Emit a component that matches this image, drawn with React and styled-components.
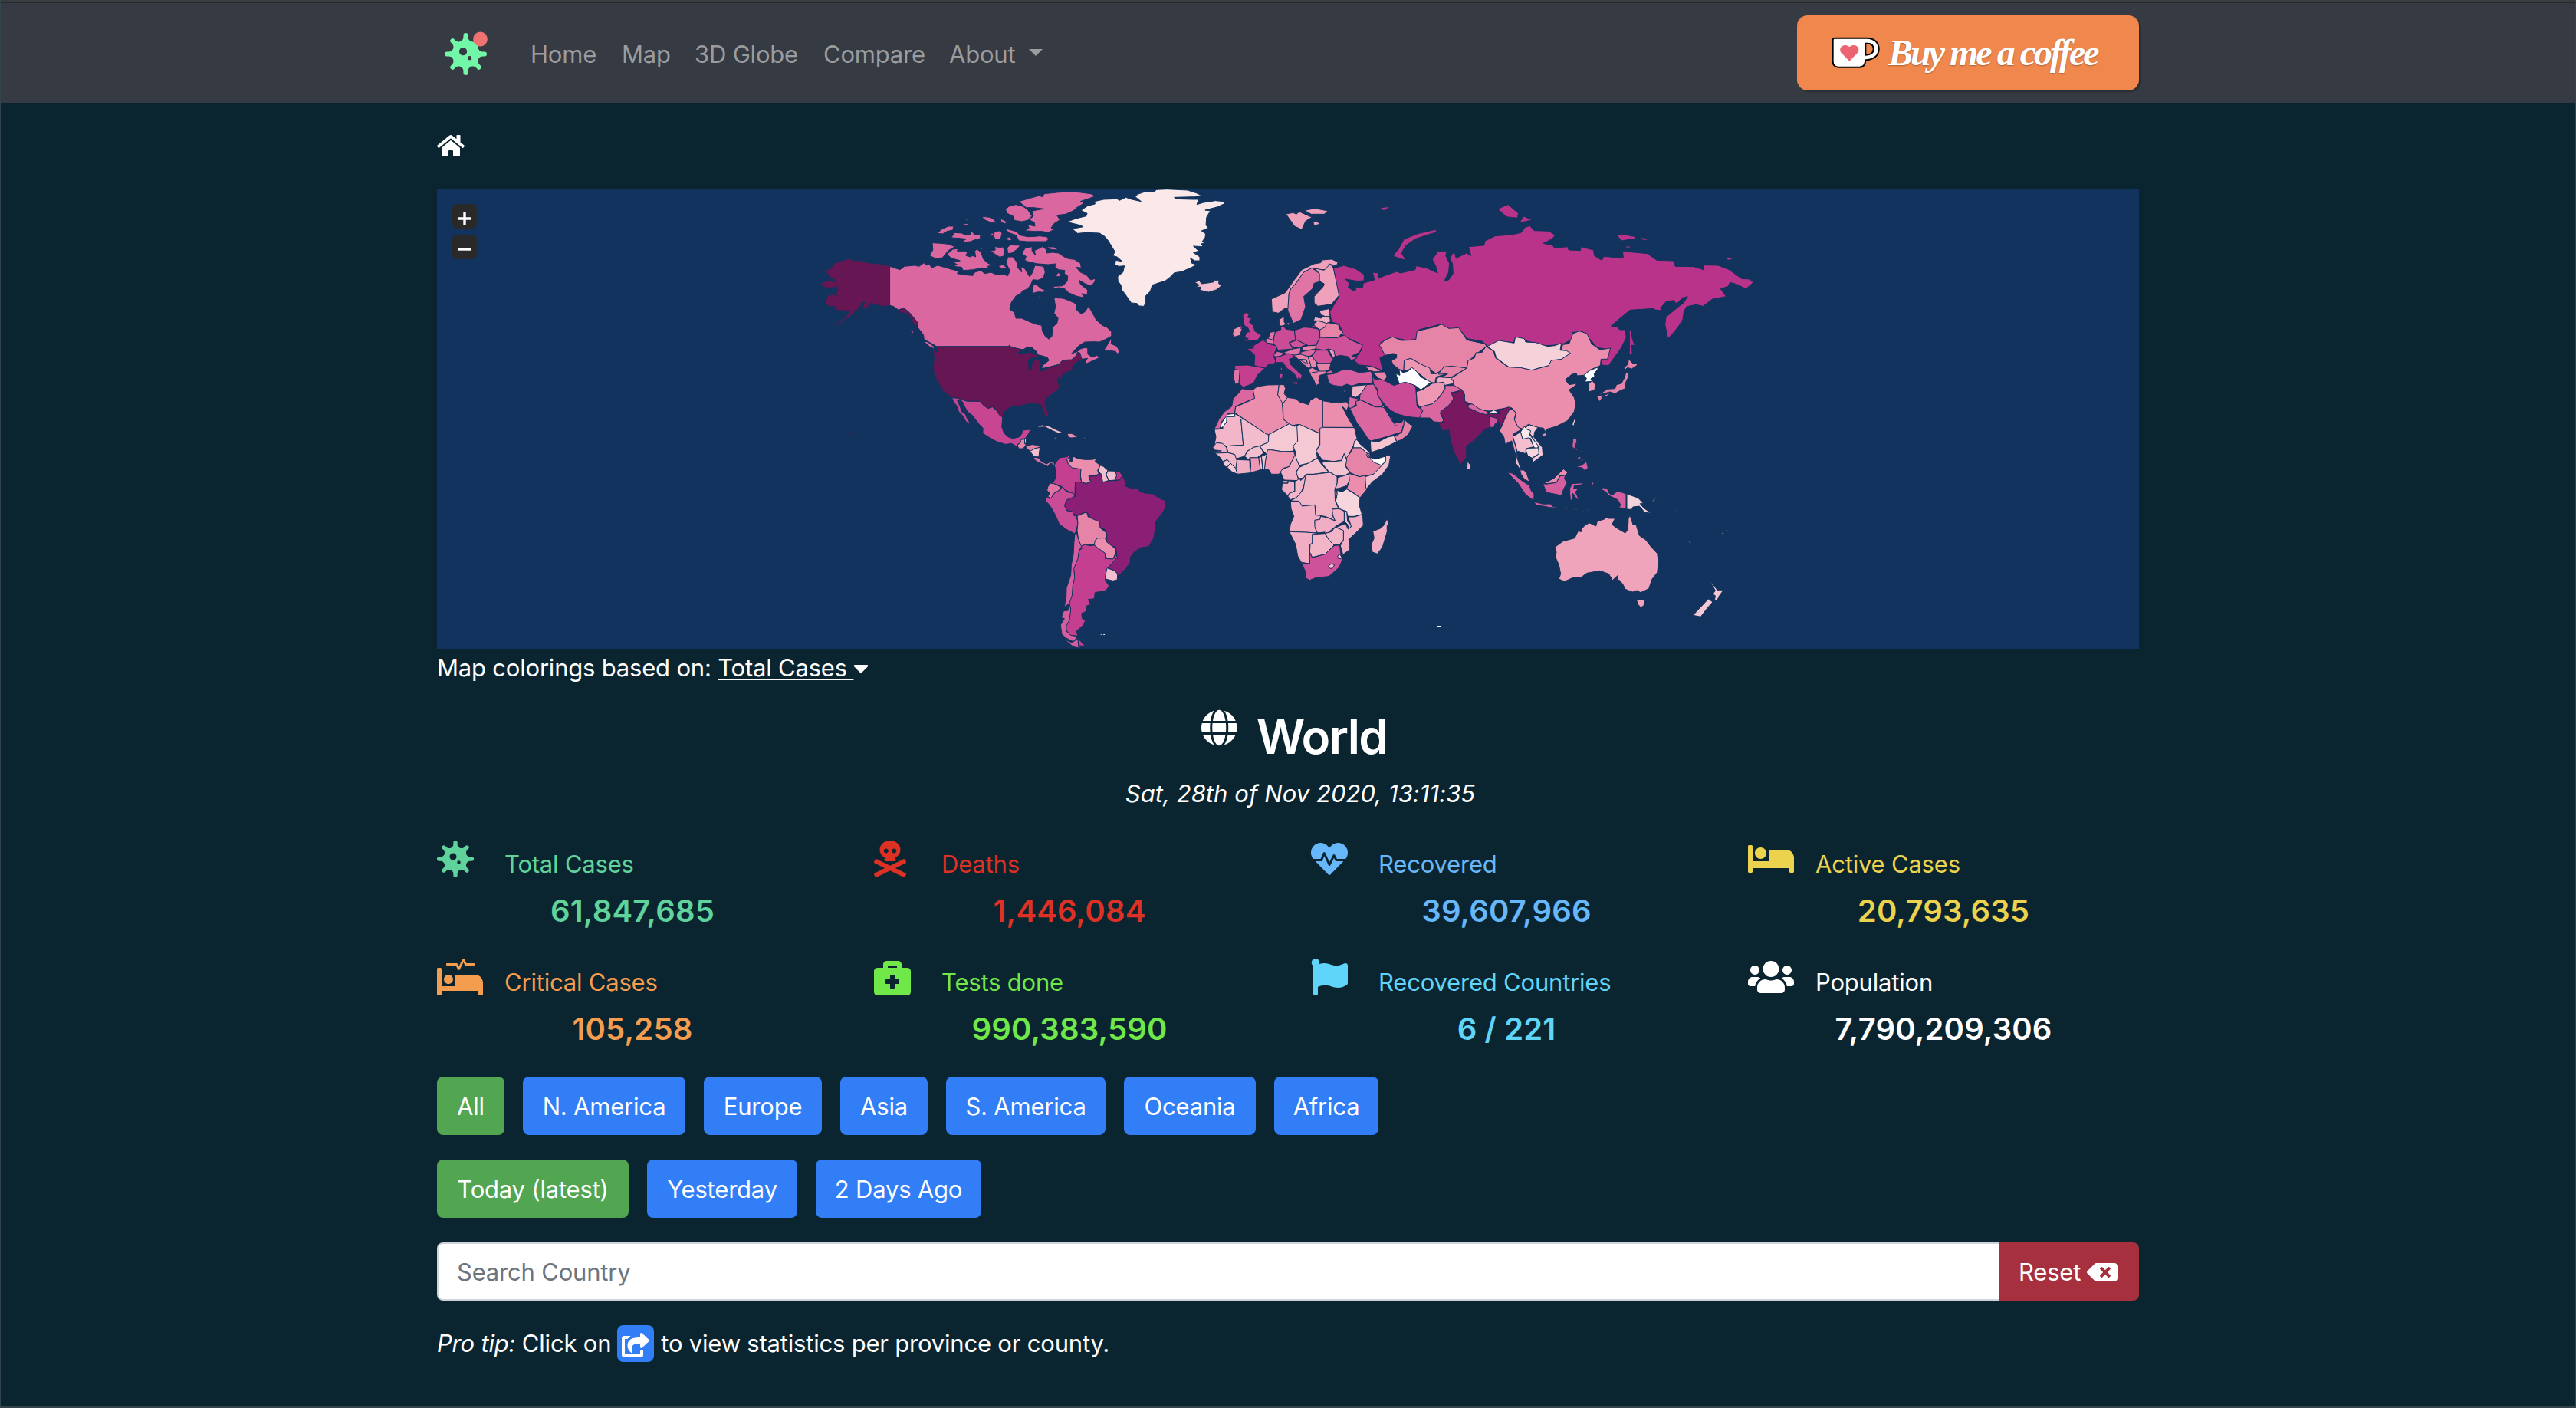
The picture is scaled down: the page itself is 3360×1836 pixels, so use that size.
import React from 'react';
import styled, { createGlobalStyle } from 'styled-components';
import {
  FaHome, FaGlobe, FaVirus, FaSkullCrossbones, FaHeartbeat, FaBed, FaProcedures,
  FaBriefcaseMedical, FaFlag, FaUsers, FaCaretDown, FaBackspace, FaShareSquare,
} from 'react-icons/fa';

const Global = createGlobalStyle`
  * { box-sizing: border-box; }
  html, body { margin: 0; background: #0b2530; }
  body {
    font-family: Inter, "Liberation Sans", sans-serif;
    font-size: 31px;
    line-height: 48px;
    letter-spacing: -0.2px;
    color: #fff;
  }
  svg { display: block; flex: none; }
`;

const Page = styled.div`
  height: 1836px;
  overflow: hidden;
  background: #0b2530;
  border: solid #33444d;
  border-width: 0 1px 2px;
`;

const Navbar = styled.nav`
  height: 134px;
  background: #363a42;
  border-top: 2px solid #383d43;
  box-shadow: inset 0 2px 0 #2a2728;
`;

const Container = styled.div`
  width: 2220px;
  margin: 0 auto;
`;

const NavInner = styled(Container)`
  height: 132px;
  display: flex;
  align-items: center;
`;

const Logo = styled.svg`
  width: 58px;
  height: 58px;
  margin: 2px 55px 0 9px;
`;

const NavLink = styled.a`
  display: flex;
  align-items: center;
  margin: 5px 32px 0 0;
  width: ${(p) => p.$w}px;
  white-space: nowrap;
  color: #9a9c9f;
`;

const Caret = styled.span`
  margin: 0 0 5px 18px;
  border: 9px solid transparent;
  border-top: 9px solid #9a9c9f;
  border-bottom: 0;
`;

const CoffeeButton = styled.a`
  display: flex;
  align-items: center;
  width: 446px;
  height: 98px;
  margin: 2px 0 0 auto;
  padding: 0 0 0 45px;
  border-radius: 14px;
  background: #f0884e;
  box-shadow: 2px 2px 2px rgba(0, 0, 0, 0.25);
`;

const Cup = styled.svg`
  width: 64px;
  height: 42px;
`;

const CoffeeText = styled.span`
  margin: 0 0 0 10px;
  font: italic 700 48px/60px "Liberation Serif", serif;
  letter-spacing: -3px;
  white-space: nowrap;
  text-shadow: 0 1px 2px rgba(0, 0, 0, 0.3);
`;

/* Font Awesome glyphs differ in width, so the icon box follows the glyph's own proportions. */
const Glyph = styled.span`
  display: block;
  flex: none;
  margin: ${(p) => p.$m || 0};
  width: ${(p) => (p.$size * (p.$units || 512)) / 512}px;
  height: ${(p) => p.$size}px;
  svg { width: 100%; height: 100%; }
`;

const Crumbs = styled.div`
  height: 112px;
  padding-top: 40px;
`;

const MapPanel = styled.div`
  position: relative;
  height: 600px;
  background: #12335d;
  overflow: hidden;
`;

const MapSvg = styled.svg`
  width: 2220px;
  height: 600px;
  path, circle {
    stroke: #12335d;
    stroke-width: 1;
    stroke-linejoin: round;
    vector-effect: non-scaling-stroke;
  }
  .isle { stroke-width: 0; }
`;

const ZoomStack = styled.div`
  position: absolute;
  left: 20px;
  top: 20px;
  display: grid;
  gap: 8px;
`;

const ZoomButton = styled.div`
  width: 32px;
  height: 32px;
  border-radius: 6px;
  background: #292929;
  display: grid;
  place-items: center;
  svg { width: 16px; height: 16px; margin: 5px 0 0 0; }
`;

const MapCaption = styled.div`
  display: flex;
  height: 48px;
  padding-top: 1px;
  white-space: pre;
  u { text-decoration-thickness: 2px; text-underline-offset: 3px; }
`;

const Title = styled.h1`
  display: flex;
  justify-content: center;
  margin: 28px 0 0;
  padding-left: 16px;
  height: 77px;
  font-size: 62px;
  line-height: 77px;
  font-weight: 600;
  letter-spacing: -1.6px;
`;

const DateLine = styled.div`
  margin-top: 12px;
  height: 47px;
  text-align: center;
  font-style: italic;
  padding-left: 32px;
  letter-spacing: 0.05px;
`;

const Stats = styled.div`
  display: grid;
  grid-template-columns: repeat(4, 510px);
  grid-auto-rows: 154px;
  column-gap: 60px;
  margin-top: 38px;
`;

const Stat = styled.div`
  color: ${(p) => p.$color};
`;

const StatHead = styled.div`
  display: flex;
  height: 55px;
`;

const StatIcon = styled.div`
  width: 88px;
`;

const StatLabel = styled.div`
  padding-top: 7px;
  white-space: nowrap;
`;

const StatValue = styled.div`
  margin-top: 7px;
  text-align: center;
  font-size: 40px;
  line-height: 60px;
  font-weight: 600;
  letter-spacing: 0.15px;
`;

const ButtonRow = styled.div`
  display: flex;
  gap: 24px;
  margin-bottom: 32px;
`;

const Button = styled.button`
  width: ${(p) => p.$w}px;
  height: 76px;
  padding: 1px 0 0;
  border: 0;
  border-radius: 8px;
  background: ${(p) => (p.$active ? '#52a551' : '#317ef7')};
  color: #fff;
  font: inherit;
  letter-spacing: inherit;
  white-space: nowrap;
`;

const Search = styled.div`
  display: flex;
  height: 76px;
  margin-bottom: 32px;
`;

const SearchField = styled.div`
  flex: 1;
  padding: 13px 24px 0;
  border: 2px solid #ced4da;
  border-right: 0;
  border-radius: 8px 0 0 8px;
  background: #fff;
  color: #6c757d;
`;

const ResetButton = styled.button`
  width: 182px;
  display: flex;
  align-items: center;
  gap: 8px;
  padding: 1px 0 0 25px;
  border: 0;
  border-radius: 0 8px 8px 0;
  background: #a7303f;
  color: #fff;
  font: inherit;
  letter-spacing: inherit;
`;

const Tip = styled.div`
  display: flex;
  white-space: pre;
`;

const TipBadge = styled.span`
  width: 48px;
  height: 48px;
  margin: 0 9px 0 8px;
  border-radius: 8px;
  background: #317ef7;
  display: grid;
  place-items: center;
`;

const C = {
  us: '#671654', canada: '#da679f', green: '#fbe9e9', mex: '#c84592', russia: '#b83389',
  india: '#771860', brazil: '#8b1f76', china: '#eb8eae', a: '#f5d2da', b: '#e684a8',
  c: '#c53f91', d: '#cb4c96', e: '#cd5299', f: '#f3bfce', g: '#f0adc3', h: '#f4c9d4',
  i: '#ee97b2', j: '#e074a5', k: '#d55e9f', white: '#ffffff', aus: '#efa4bb', n: '#efa0ba',
};

const regions = [
  {
    t: 'translate(470 -6) scale(.38265 .33333)',
    shapes: [
      [C.us, 'M315,322L300,315 268,311 240,308 214,299 190,300 177,291 160,297 145,302 127,310 118,325 105,337 88,341 105,352 112,365 128,375 130,383 110,377 92,382 77,392 92,404 115,407 135,402 138,415 130,428 138,436 120,432 102,436 103,447 92,456 100,473 115,480 128,478 130,492 150,495 165,497 180,496 172,510 160,525 150,535 130,547 106,559 125,553 155,541 160,531 180,519 195,500 213,483 220,465 230,462 220,490 245,480 250,466 270,473 290,479 315,474 345,493 362,484 380,500 395,520 412,545 408,554 395,545 378,508 355,503 335,490 315,478Z M194,520L212,514 200,526Z M178,979 183,975 187,980 182,983Z'],
      [C.us, 'M462,648L480,660 474,635 722,635 745,642 770,648 752,660 765,665 785,658 800,660 815,668 825,675 800,680 788,690 790,725 798,728 800,700 812,685 825,690 832,705 825,728 835,732 850,722 868,714 890,707 905,690 935,688 948,675 955,658 963,662 970,685 950,700 937,715 940,725 920,735 905,745 897,765 890,755 888,770 893,790 890,805 870,820 850,838 843,855 850,880 857,900 855,915 845,905 835,885 832,865 815,860 790,860 770,865 760,868 735,868 715,880 702,895 702,912 690,905 680,885 665,870 650,878 635,868 620,850 600,850 580,850 545,838 527,835 497,810 485,785 470,755 465,735 463,710 467,685Z'],
      [C.canada, 'M315,322L350,335 365,322 400,318 415,322 432,308 440,318 450,312 458,328 478,318 500,325 530,335 550,340 545,350 570,355 598,358 605,345 625,338 640,350 660,345 680,355 710,352 715,362 725,340 712,310 718,285 735,285 748,305 752,328 765,345 762,325 775,330 785,350 792,363 802,345 810,318 840,322 845,345 838,368 820,376 803,374 795,395 785,410 768,418 760,430 745,438 730,462 724,490 740,502 745,525 765,525 790,538 812,548 833,553 835,575 845,595 858,607 868,595 870,560 885,545 889,525 875,505 880,480 875,445 905,447 925,455 950,468 950,490 967,508 980,500 993,478 1008,508 1018,530 1040,553 1055,560 1071,578 1071,595 1050,608 1030,618 1010,617 980,618 960,632 935,663 955,655 965,645 980,640 990,642 990,665 1005,678 1020,670 1032,678 1010,690 985,703 982,690 990,682 970,685 963,660 955,658 948,675 935,687 905,689 890,706 870,712 850,718 832,722 840,705 858,690 852,678 835,672 820,668 815,655 800,640 785,637 770,648 745,642 728,636 722,630 722,635 474,635 455,622 432,608 430,590 410,560 412,545 395,520 380,500 362,484 345,493 330,480 315,474Z'],
      [C.canada, 'M1071,600L1062,620 1045,650 1065,652 1085,655 1092,665 1098,655 1090,635 1070,625Z M430,615L445,618 465,635 468,645 450,635Z M385,570L395,572 395,588Z'],
      [C.canada, 'M755,68L785,58 825,45 835,50 842,38 885,33 920,30 960,32 1000,38 1018,47 990,58 965,68 978,75 955,90 940,105 915,118 885,122 895,140 875,155 865,172 875,178 855,190 835,185 805,185 775,182 790,172 785,158 810,165 808,150 790,140 805,125 800,105 840,97 805,92 780,92Z M710,100L720,88 745,80 770,88 785,100 800,125 785,142 765,147 740,142 735,125 715,115Z M630,127L655,130 672,140 678,153 655,148 635,138Z M693,135L715,148 708,155 695,150Z M562,155L588,155 575,163Z M568,140L585,137 583,143Z M478,193L490,178 515,165 533,165 530,180 510,185 495,195Z M525,210L535,190 560,192 575,200 590,198 592,182 605,198 625,200 622,215 605,218 590,225 560,228 575,215 555,212Z M657,195L665,192 670,198 672,186 690,183 698,192 693,215 675,217 670,205Z M708,215L722,207 733,215 725,222Z M708,173L745,185 760,200 785,206 810,205 825,203 850,206 857,215 848,225 820,225 785,225 755,222 745,200 720,190Z'],
      [C.canada, 'M460,230L490,232 515,235 537,245 515,260 495,288 475,293 450,280 462,258Z M510,275L530,255 548,253 545,262 565,262 580,265 575,280 590,285 598,280 608,285 605,262 612,255 625,265 635,295 650,310 667,318 648,322 655,332 630,328 600,335 565,338 560,325 530,322 545,315 530,305 555,300 525,290Z M658,262L675,258 672,245 695,248 700,245 708,265 703,282 690,286 675,275Z M715,250L725,238 760,240 750,255 730,270 718,272Z M685,322L700,315 715,328 700,332Z M620,250L635,247 630,256Z'],
      [C.canada, 'M768,265L778,250 800,245 800,262 812,278 808,260 828,250 835,245 848,255 850,270 870,267 890,270 910,285 925,292 945,295 965,310 968,328 950,325 965,345 985,355 1000,375 1015,370 1015,380 1003,398 985,392 962,377 965,392 990,415 988,435 970,428 978,445 950,438 925,425 910,408 890,405 875,410 873,400 905,398 920,380 922,360 910,350 912,338 890,335 878,325 880,312 855,315 820,312 790,305 775,298 780,283 768,275Z M850,246L875,246 888,258 865,256Z M882,355L890,347 898,352 893,362 884,362Z M805,392L815,393 830,408 852,420 835,423 820,422 800,428 803,410Z M822,441L835,438 826,446Z'],
      [C.green, 'M918,148L950,135 985,125 988,115 967,103 990,85 1015,78 1013,68 1045,60 1090,58 1098,64 1120,52 1140,60 1172,68 1152,50 1160,40 1183,31 1215,30 1225,22 1260,20 1330,24 1360,35 1378,44 1350,50 1285,52 1290,58 1345,60 1368,60 1362,80 1385,72 1425,65 1455,68 1458,76 1430,90 1390,102 1408,105 1395,130 1393,160 1400,172 1378,183 1392,195 1390,210 1380,225 1392,228 1375,235 1385,245 1350,243 1368,262 1350,268 1372,285 1372,300 1355,300 1340,290 1345,310 1363,315 1340,328 1310,343 1285,347 1270,365 1255,378 1210,395 1203,420 1187,438 1188,460 1182,478 1165,477 1158,467 1138,465 1120,435 1107,415 1103,395 1093,380 1092,362 1110,345 1115,320 1095,322 1083,315 1085,298 1108,303 1090,285 1075,280 1083,265 1072,245 1060,222 1048,205 1030,192 985,190 955,193 937,175 975,167 960,160Z'],
      [C.f, 'M1355,385L1370,377 1378,390 1400,387 1420,383 1422,376 1438,376 1436,388 1445,398 1430,413 1402,423 1372,415 1375,403 1358,403 1370,395Z'],
      [C.mex, 'M527,836L545,838 580,850 605,850 622,850 635,866 650,878 665,872 678,885 690,905 700,912 697,950 705,975 720,990 735,995 755,990 765,978 767,963 795,960 788,978 780,990 778,995 760,998 762,1010 750,1020 748,1027 730,1015 710,1018 680,1008 655,992 632,975 633,955 620,940 605,918 600,908 580,890 570,870 562,850 545,845 555,870 560,890 573,900 580,920 592,940 575,930 565,908 550,890 545,870 532,850Z'],
      [C.f, 'M815,952L835,942 860,948 880,960 905,972 890,975 865,962 845,950Z M873,991L888,991 880,996Z M971,991L983,993 978,996Z M868,900L873,904Z'],
      [C.china, 'M920,976L935,976 958,988 940,993 925,992Z'],
      [C.b, 'M750,1022L762,1010 760,1000 775,998 775,1015 780,1020 770,1035 755,1035Z M778,1025L800,1019 825,1022 826,1030 808,1035 795,1045 785,1038Z'],
      [C.a, 'M775,998L781,995 779,1015 775,1015Z'],
      [C.f, 'M793,1045L810,1035 827,1030 823,1068 805,1064Z'],
    ],
  },
  {
    t: 'translate(990 -6) scale(.48469 .33333)',
    shapes: [
      [C.russia, 'M370,330L398,318 430,332 453,355 452,378 435,380 402,372 412,388 410,405 428,420 432,402 448,408 450,388 480,375 478,360 475,345 490,348 490,370 505,360 540,342 550,348 590,335 592,320 620,328 650,348 645,320 636,295 652,262 675,262 672,280 682,310 680,345 668,380 680,375 692,350 690,310 683,290 695,262 700,290 728,270 740,280 733,245 775,240 778,222 805,203 850,198 875,190 885,170 898,163 910,182 950,184 967,200 958,215 935,232 960,240 965,250 1000,245 1003,258 1035,260 1035,245 1070,258 1072,280 1092,298 1098,283 1150,290 1148,263 1215,272 1240,298 1285,300 1290,322 1340,323 1365,335 1367,317 1405,318 1435,335 1468,370 1490,372 1500,385 1480,410 1455,392 1437,385 1432,400 1412,410 1427,440 1390,450 1365,478 1345,472 1320,480 1313,500 1310,530 1297,560 1280,590 1270,605 1262,550 1265,520 1300,478 1312,465 1323,440 1310,445 1293,468 1285,455 1265,460 1250,485 1252,495 1235,492 1232,487 1168,493 1117,555 1135,560 1140,570 1155,570 1158,600 1145,640 1110,710 1090,708 1090,685 1113,648 1080,640 1050,590 1040,578 1013,580 1015,605 985,628 945,632 930,630 885,612 860,598 855,620 820,615 785,635 770,615 730,605 708,565 690,570 655,550 600,570 597,605 570,612 525,600 497,620 500,645 515,665 495,680 498,700 503,730 470,712 440,708 425,690 445,650 447,628 405,600 390,585 395,580 385,548 365,540 360,500 385,440 375,400 375,365Z'],
      [C.russia, 'M530,280L545,255 560,215 600,193 645,178 648,188 620,200 590,215 565,240 553,270 565,298 545,290Z M812,97L840,80 868,115 865,133 835,128Z M870,152L882,126 905,140Z M1133,200L1145,196 1180,205 1183,213 1145,222Z M1195,208L1222,216 1205,221Z M1152,248L1162,241 1173,250Z M1425,294L1435,286 1445,292 1435,298Z M495,92L525,88 505,104Z'],
      [C.russia, 'M1166,575L1171,568 1174,605 1181,632 1173,630 1174,668 1166,665 1167,625Z'],
      [C.n, 'M242,117L262,112 270,118 278,108 312,130 295,145 285,178 265,165Z M292,103L320,95 355,105 345,118 310,118Z M315,148L325,146 335,157 318,162Z'],
      [C.n, 'M203,450L240,425 262,380 285,335 318,312 335,308 340,297 365,294 382,305 380,315 370,320 360,312 350,335 330,335 315,328 290,345 268,390 255,410 250,430 250,490 240,485 222,505 205,500Z'],
      [C.n, 'M320,330L345,337 362,312 370,330 375,365 385,435 365,470 328,478 318,465 318,440 343,400 345,390 332,380 332,350Z'],
      [C.j, 'M290,345L312,328 332,350 332,382 318,388 313,410 290,440 295,480 283,530 262,545 247,495 250,430 255,410 268,390Z'],
    ],
  },
  {
    t: 'translate(750 314) scale(.33333)',
    shapes: [
      [C.j, 'M85,108L105,112 115,125 135,135 150,127 165,130 168,145 160,135 150,132 140,145 120,135 100,127 88,118Z'],
      [C.c, 'M165,140L175,125 190,110 215,107 230,97 225,107 215,118 220,135 235,150 270,155 268,195 275,207 248,205 246,262 240,250 215,240 190,220 158,210 172,190 172,160Z'],
      [C.china, 'M215,118L228,108 227,125 235,125 238,105 262,115 285,118 310,118 330,115 325,125 345,140 335,160 340,175 318,182 300,182 308,205 290,212 272,205 268,180 270,155 235,150 220,135Z'],
      [C.f, 'M345,140L358,145 375,160 368,175 378,200 355,207 350,180 338,160Z M375,162L405,163 410,180 403,198 380,200 368,178Z'],
      [C.russia, 'M405,163L420,165 432,180 425,198 403,198 410,180Z'],
      [C.brazil, 'M250,205L275,207 290,212 308,205 303,183 330,182 348,172 355,207 380,200 405,200 420,198 432,180 447,210 442,220 465,230 490,232 505,245 525,250 550,252 575,268 598,278 603,300 590,325 563,360 560,395 553,428 535,458 505,462 478,480 463,500 463,520 445,545 415,575 413,562 400,552 375,542 412,500 405,460 385,455 370,440 370,405 362,390 345,385 343,365 310,350 292,322 258,335 240,332 238,322 215,318 205,298 215,275 240,262 248,262 247,225Z'],
      [C.j, 'M140,225L150,210 165,212 190,225 185,238 165,250 152,270 140,262 148,250 137,238Z'],
      [C.d, 'M133,262L148,272 155,265 165,250 190,235 195,225 215,245 240,248 246,262 215,275 205,298 215,318 238,322 240,335 252,340 258,365 252,395 246,408 215,392 185,370 170,335 150,300 133,280Z'],
      [C.b, 'M255,338L292,323 298,342 343,362 345,385 370,405 368,425 330,425 322,452 285,450 270,458 260,430 255,395 258,365Z'],
      [C.china, 'M325,435L335,425 365,425 370,440 403,465 405,485 395,507 370,505 365,485 328,460 322,450Z'],
      [C.c, 'M270,458L285,450 305,455 322,453 365,485 365,505 395,507 408,490 412,500 375,542 367,565 365,590 380,612 368,630 325,638 322,662 298,665 308,685 292,690 290,712 272,720 275,740 288,745 280,765 268,775 252,790 258,808 228,805 212,785 212,765 222,750 225,725 230,700 222,680 228,640 240,600 245,565 240,545 255,510 260,475 275,465Z M262,820L280,842 292,848 262,846Z'],
      [C.k, 'M246,408L253,405 260,430 272,458 262,475 258,505 242,545 245,580 238,610 235,650 225,680 230,705 225,745 212,770 213,790 230,805 258,810 240,830 210,815 195,800 190,765 205,740 193,736 202,710 220,708 220,682 212,690 205,692 212,655 213,620 230,570 232,530 240,490 243,440Z M205,822L235,834 258,818 260,850 272,852 262,855 240,850Z'],
      [C.f, 'M372,542L400,552 413,565 412,588 395,592 365,585 367,565Z'],
      [C.green, 'M338,804L355,799 352,806Z M354,800L369,799 360,807Z'],
    ],
  },
  {
    t: 'translate(970 154) scale(.33333)',
    shapes: [
      [C.canada, 'M240,320L260,325 283,325 290,358 255,372 215,390 212,415 185,418 180,430 160,450 155,477 132,477 150,440 170,412 200,390 205,360 225,340Z'],
      [C.white, 'M184,421L212,418 212,430 185,430 180,450 165,470 153,478 160,455 170,440Z'],
      [C.china, 'M283,325L300,312 340,306 385,305 380,345 397,372 402,440 425,458 345,500 335,498 212,415 215,392 255,375 290,358Z'],
      [C.i, 'M385,305L405,305 410,320 405,340 418,355 400,380 380,345Z'],
      [C.china, 'M418,355L450,360 465,372 500,383 508,365 530,353 556,368 556,495 545,495 462,460 435,465 402,440 400,380Z'],
      [C.china, 'M556,368L600,375 650,372 658,385 650,405 632,390 655,435 678,472 556,472Z'],
      ['#f3b5c8', 'M132,480L165,478 165,470 180,450 180,430 212,430 212,418 248,440 236,440 245,541 178,545 150,532 132,540 138,510Z'],
      ['#f2bccc', 'M236,440L248,440 335,498 345,502 343,530 310,545 285,550 260,565 250,585 215,595 212,578 185,570 180,545 245,541Z'],
      [C.h, 'M345,500L425,458 445,468 460,463 462,500 455,540 440,565 400,567 355,560 335,575 320,560 310,545 343,530Z'],
      [C.h, 'M455,465L465,460 545,497 545,540 530,560 535,590 500,612 465,620 445,590 450,570 440,545 458,525Z'],
      [C.g, 'M545,475L556,472 680,473 690,515 672,550 660,575 650,600 640,575 630,600 600,605 555,600 530,565 545,540Z'],
      [C.a, 'M690,520L700,535 742,572 735,577 705,552 675,552 680,525Z'],
      [C.b, 'M675,552L705,552 735,578 740,590 790,620 755,655 730,660 700,665 665,650 645,620 650,590 665,570Z M727,578L740,572 742,588 732,590Z'],
      [C.white, 'M740,588L760,597 802,585 802,605 785,620 755,608Z'],
      [C.f, 'M802,583L822,580 815,620 790,655 750,685 725,715 722,665 755,655 788,620 802,605Z'],
      [C.china, 'M658,652L700,665 722,660 722,700 728,715 702,747 680,730 650,712 660,680Z'],
      [C.g, 'M615,668L658,655 660,680 650,700 620,710 606,712 612,690Z'],
      ['#f6d5dd', 'M612,718L630,725 650,713 680,732 702,748 698,775 710,812 680,820 655,820 648,800 620,790 607,760 612,735Z'],
      [C.f, 'M602,722L610,718 612,733 603,745Z'],
      ['#f3c3d0', 'M555,605L600,605 630,602 640,575 650,600 645,625 662,648 640,662 610,662 580,645 555,615Z'],
      [C.f, 'M465,628L500,612 535,592 550,615 580,648 555,650 520,655 490,655 480,670 462,672 450,650Z'],
      [C.g, 'M445,570L455,600 465,625 452,645 462,680 405,678 390,645 400,635 425,625 440,590Z'],
      [C.i, 'M340,560L355,560 400,567 442,565 447,580 425,625 400,632 385,655 355,655 345,638 328,635 332,600Z'],
      ['#f3c3d0', 'M305,592L316,586 322,637 312,637Z M316,586L337,576 332,600 328,637 321,637Z'],
      [C.i, 'M272,590L305,590 312,638 272,650 275,620Z'],
      [C.g, 'M218,598L270,600 272,650 222,655 216,635Z'],
      [C.f, 'M250,585L262,565 285,550 310,545 325,572 300,590 270,590 268,600Z'],
      [C.g, 'M126,550L140,532 165,535 180,552 182,571 135,573 130,566 160,564 130,560Z'],
      ['#f3b5c8', 'M135,573L185,571 212,578 220,602 216,632 195,612 182,598 165,606 155,590Z'],
      [C.h, 'M165,608L182,598 195,612 182,628 170,622Z M182,628L195,612 215,632 222,655 200,645Z'],
      [C.g, 'M400,680L420,680 420,690 398,690Z M398,690L420,690 420,680 445,685 447,720 425,730 420,740 395,715Z'],
      ['#f3b5c8', 'M447,685L465,672 470,680 490,660 485,690 472,725 455,745 430,755 420,742 425,730 447,722Z'],
      ['#f1b3c6', 'M490,656L525,655 585,648 612,665 612,690 603,715 605,760 618,790 595,790 593,815 605,838 590,830 565,820 530,815 525,775 500,780 470,775 460,760 430,760 455,745 480,715Z'],
      [C.g, 'M430,763L465,762 475,780 525,775 528,815 548,817 545,832 525,835 527,868 535,885 485,882 425,880 430,850 443,820 432,790Z'],
      [C.g, 'M548,820L575,825 605,838 595,815 593,792 620,790 640,800 640,840 612,855 575,885 535,885 525,860 525,835 545,832Z'],
      [C.f, 'M640,800L650,800 653,840 668,855 660,872 652,850 642,840Z'],
      [C.g, 'M655,822L680,822 712,812 715,855 685,885 658,910 662,950 635,970 625,935 637,912 637,878 610,862 645,848 655,870 668,860Z'],
      ['#f2b5c8', 'M565,887L590,880 605,862 637,875 637,912 620,932 595,930 575,908Z'],
      ['#f2b5c8', 'M515,890L565,887 580,912 600,933 565,968 515,980 505,960 507,928 515,925Z'],
      [C.g, 'M425,880L485,882 535,885 565,882 515,890 515,925 505,930 505,1005 472,1000 458,975 450,930Z'],
      [C.e, 'M472,1000L492,1007 505,1005 505,960 515,982 565,968 600,935 622,932 628,975 635,985 620,1020 580,1055 530,1060 505,1070 490,1062 490,1040Z'],
      [C.f, 'M614,975L622,969 630,978 627,986 617,985Z M578,1015L590,1005 602,1010 592,1024 583,1023Z'],
      [C.g, 'M808,828L815,860 808,855 808,880 790,940 770,967 750,960 746,930 757,905 752,878 780,868 795,855Z'],
      [C.c, 'M243,35L255,23 268,28 262,42 278,45 268,60 285,75 290,95 305,105 315,112 302,130 270,132 245,138 265,125 250,120 258,100 270,98 262,80 250,75 245,55Z M226,80L235,72 242,85 235,90Z'],
      [C.china, 'M207,88L228,78 240,88 232,112 210,118 203,108Z'],
      [C.j, 'M210,245L232,248 228,300 213,303 207,275Z'],
      [C.c, 'M212,230L260,228 330,240 300,268 285,300 262,308 245,315 228,300 232,262 232,248 212,245Z'],
      [C.russia, 'M258,165L285,162 285,152 322,130 345,145 382,155 370,175 365,195 372,215 362,225 345,225 330,240 288,230 290,190 275,175Z'],
      [C.j, 'M330,130L345,120 350,100 370,97 365,120 362,145 340,142Z M340,124L362,130'],
      [C.d, 'M370,100L392,90 392,76 405,78 412,88 445,92 450,128 425,140 440,165 380,170 375,155 362,145 365,120Z'],
      [C.i, 'M388,75L385,50 405,38 405,60 412,68 400,75Z M414,64L426,62 424,74Z'],
      [C.d, 'M445,93L482,80 510,82 540,88 545,120 530,150 500,152 475,140 450,128Z'],
      [C.russia, 'M503,78L525,72 540,80Z'],
      [C.e, 'M425,142L455,130 490,148 470,158 440,160Z'],
      [C.j, 'M400,180L440,165 470,160 468,180 445,190 420,185Z'],
      [C.canada, 'M363,190L378,175 402,180 395,192 372,196Z'],
      [C.c, 'M372,198L395,192 420,183 442,188 440,200 425,205 430,225 455,250 475,268 470,285 462,275 460,290 445,262 415,240 400,218 372,218Z M430,295L458,294 455,306Z M388,262L400,262 398,278 388,282Z M390,240L398,236 397,255Z'],
      [C.b, 'M475,158L500,152 530,152 528,165 490,172 475,168Z'],
      [C.canada, 'M470,178L490,172 526,167 528,175 510,192 485,196 472,188Z'],
      [C.b, 'M442,190L470,186 500,195 505,215 512,235 500,240 480,225 460,205Z M462,205L492,207 497,225Z'],
      [C.b, 'M498,195L514,193 530,215 532,235 512,240 505,215Z'],
      [C.e, 'M514,192L530,170 575,170 590,198 597,205 585,222 540,222 525,210Z'],
      [C.i, 'M578,166L600,170 605,192 597,200Z'],
      [C.b, 'M532,225L540,222 588,222 582,245 555,258 540,250Z'],
      [C.b, 'M500,245L515,238 540,252 575,252 570,262 545,268 540,290 545,300 530,308 520,285 510,270Z M512,258L538,254'],
      [C.b, 'M550,323L564,325 564,329 552,328Z M634,330L650,325 644,334Z'],
      [C.e, 'M530,152L545,120 600,122 640,112 665,130 712,150 700,178 670,192 690,200 668,210 655,195 625,190 605,195 600,172 580,165 560,170 530,165Z'],
      [C.b, 'M545,118L545,90 575,62 618,70 620,85 635,100 615,122 590,120Z'],
      [C.i, 'M520,68L535,55 572,62 565,80 545,90 530,80Z'],
      [C.g, 'M520,55L525,40 550,45 555,38 583,40 587,58 570,65 545,55Z M543,15L580,8 585,38 565,38 548,30Z'],
      [C.k, 'M572,265L600,262 630,248 660,245 700,258 745,252 755,280 750,300 700,300 670,310 650,303 630,312 600,308 580,300Z M570,255L588,248 600,260 575,264Z'],
      [C.b, 'M722,230L760,238 785,252 760,255 735,248Z M750,256L800,255 808,275 795,288 775,280Z'],
      ['#f0b2c6', 'M672,310L700,308 728,305 720,330 685,355 668,350Z'],
      [C.k, 'M728,305L755,303 770,330 772,345 795,390 760,390 700,362 702,345Z'],
      [C.canada, 'M660,352L682,358 700,362 670,398 657,395Z'],
      [C.canada, 'M662,398L688,388 685,370 705,365 760,392 795,392 830,450 870,468 865,490 800,510 745,525 735,520 715,488 690,455Z'],
      [C.i, 'M782,388L795,385 797,397Z'],
      ['#f3c3d0', 'M742,525L775,528 810,510 835,505 845,528 790,555 745,570Z'],
      [C.b, 'M875,440L885,450 908,468 890,500 865,520 845,527 838,507 865,492 872,468Z'],
      [C.canada, 'M835,455L865,452 876,435 872,468 840,465Z M820,430L829,435 825,446Z'],
      [C.d, 'M750,270L760,285 780,282 800,290 835,308 870,295 905,298 920,315 925,390 948,405 935,435 885,430 850,420 822,405 800,385 785,365 770,345 772,325 755,303Z'],
      [C.b, 'M778,150L800,130 830,118 865,132 920,130 925,95 1000,78 1020,68 1050,85 1088,82 1120,130 1190,145 1197,155 1150,190 1125,215 1120,240 1060,235 1020,248 1000,262 975,245 940,225 900,202 875,210 873,250 855,245 830,225 825,210 845,200 845,185 830,183 800,190Z'],
      [C.i, 'M875,210L900,202 940,225 975,240 980,262 1000,262 1025,248 1045,262 1015,270 1000,275 995,298 975,295 925,255 905,238 890,248 873,250Z'],
      [C.white, 'M842,262L858,268 855,245 870,258 890,252 905,238 925,255 940,275 980,295 940,325 918,308 880,295 855,300 848,280Z'],
      [C.b, 'M1008,264L1030,235 1060,232 1120,240 1060,275 1025,275 1045,262Z'],
      [C.g, 'M1000,285L1010,275 1060,278 1070,300 1030,308 1000,300Z'],
      [C.i, 'M922,332L945,325 985,300 1030,295 1035,320 1010,355 985,380 935,392 925,375Z'],
      [C.canada, 'M935,392L985,380 1015,352 1035,320 1035,308 1075,308 1105,325 1065,335 1070,360 1050,390 1015,415 1030,445 1020,452 990,450 975,435 935,435 948,405Z'],
    ],
  },
  {
    t: 'translate(1310 154) scale(.33333)',
    shapes: [
      [C.china, 'M48,290L38,280 62,265 100,240 105,210 130,200 135,180 160,178 175,155 205,175 212,200 260,235 310,238 355,248 420,230 430,208 470,205 505,182 470,170 475,148 500,145 515,105 540,95 570,105 588,145 620,168 662,162 650,205 625,205 622,230 580,248 558,268 532,270 528,260 510,265 485,285 500,305 530,300 525,308 500,325 520,355 527,378 520,410 495,445 450,468 415,478 405,488 400,475 378,472 340,460 320,478 300,472 285,450 292,415 275,395 230,400 190,408 150,405 120,382 92,370 90,345 80,325 50,308Z M395,498L412,492 408,505 398,510Z'],
      [C.a, 'M180,155L225,132 285,142 290,118 325,125 330,138 370,140 415,155 445,152 470,142 465,170 490,172 505,182 470,205 430,210 420,230 380,240 355,248 310,238 265,236 240,218 215,200 208,175Z'],
      [C.india, 'M38,335L60,335 80,323 92,345 88,365 105,385 150,410 185,420 188,408 200,420 228,418 230,402 265,392 275,402 252,430 240,455 230,475 225,450 215,438 190,428 192,472 170,480 150,500 120,530 98,545 98,590 75,617 50,570 35,520 30,482 5,485 -12,455 10,450 -3,410 30,385 48,360Z'],
      [C.canada, 'M105,384L120,380 150,400 182,410 182,424 150,415 105,395Z'],
      [C.green, 'M190,412L205,404 222,412 215,418 195,418Z'],
      [C.e, 'M187,428L222,438 220,460 212,455 205,472 192,472Z'],
      [C.china, 'M252,430L265,405 278,402 292,415 285,440 300,470 315,480 285,495 280,510 295,560 298,605 285,560 275,525 250,538 245,510 228,485 240,460Z'],
      [C.h, 'M320,478L345,462 378,472 365,490 362,510 395,550 398,580 360,608 355,595 378,578 380,550 350,500Z'],
      [C.green, 'M310,490L325,468 335,480 350,485 345,500 380,545 375,557 362,550 350,515 318,518Z'],
      [C.f, 'M280,508L310,490 318,518 345,512 362,548 332,555 330,575 300,565 297,592 310,632 325,640 308,636 290,610 298,570 290,540Z'],
      ['#f6d5dd', 'M330,560L345,553 380,552 382,575 355,592 338,582Z'],
      [C.china, 'M308,638L325,640 335,655 345,685 325,675 312,655Z M402,690L440,672 478,635 495,648 485,660 465,660 450,688 410,692Z'],
      [C.k, 'M258,648L280,652 315,680 345,700 352,720 363,732 362,758 330,735 300,690Z M363,763L400,772 425,771 435,780 460,787 425,785 370,775Z M398,692L410,694 450,688 465,662 485,660 482,672 492,690 480,710 470,738 430,730 410,725Z M503,710L512,692 555,689 553,695 520,700 518,712 536,712 525,725 538,754 530,752 515,730 512,757 505,755 503,730Z M587,688L592,685 596,692 590,700Z M592,733L615,734 605,737Z M575,736L582,737 578,739Z M620,713L635,708 650,712 655,728 668,738 690,720 723,732 723,790 695,785 702,775 690,755 655,738 642,722Z M478,789L497,790 490,793Z M508,791L538,789 525,794Z M503,799L514,803 508,804Z M545,805L560,795 555,803Z M655,762L657,768Z'],
      [C.a, 'M726,732L770,748 790,768 778,770 790,785 820,808 795,803 775,780 750,783 745,793 726,792Z M803,762L825,762 838,745 835,758 822,766Z M560,797L578,790 570,796Z M864,760L876,770 868,766Z'],
      [C.a, 'M917,796L922,802 917,800Z M963,912L988,933 970,922Z M1095,884L1108,885 1100,889Z M1110,875L1122,870 1115,876Z M987,856L990,857 989,861Z'],
      [C.k, 'M515,515L530,515 530,530 522,545 525,556 540,562 530,562 512,548Z M532,590L547,585 540,603Z M530,625L550,620 568,605 574,630 562,642 552,630 535,628Z M545,562L548,570 543,566Z M558,575L565,582 560,585Z M550,592L556,600 548,606Z M495,605L503,593 496,608Z'],
      [C.g, 'M102,605L115,620 113,635 100,637Z'],
      [C.a, 'M512,460L520,440 526,440 518,467Z'],
      [C.white, 'M558,268L580,250 612,237 612,245 598,262 600,272 585,282 590,292 562,294 568,280Z'],
      [C.i, 'M577,298L592,290 603,305 600,325 577,333Z'],
      [C.b, 'M733,205L750,222 768,222 765,230 745,243 728,238 718,248 715,238 730,225Z M722,255L731,262 732,275 720,300 720,320 700,328 680,340 660,333 615,345 650,322 680,320 685,305 705,300 718,275Z M608,350L627,345 628,358 620,371Z M636,347L658,338 655,345 642,352Z'],
      [C.aus, 'M445,940L475,918 522,905 535,878 548,880 550,868 565,852 580,846 605,858 610,840 640,830 640,822 655,828 680,828 668,852 690,868 720,885 730,870 732,830 738,815 750,852 762,852 775,895 800,912 820,938 845,965 850,1000 845,1040 825,1065 812,1103 780,1118 765,1110 748,1116 720,1105 710,1085 695,1068 688,1075 692,1050 670,1070 655,1045 620,1033 570,1042 545,1060 515,1060 482,1075 460,1065 467,1045 460,1010 447,980 450,960Z M763,1145L797,1147 792,1170 780,1176 770,1165Z'],
      [C.h, 'M1050,1072L1070,1095 1080,1108 1105,1108 1088,1130 1078,1152 1070,1145 1072,1130 1062,1125 1072,1110Z M1045,1143L1062,1155 1040,1180 1015,1213 985,1207 1010,1180Z'],
    ],
  },
];

const stats = [
  [FaVirus, 512, 'Total Cases', '61,847,685', '#5fd39b'],
  [FaSkullCrossbones, 448, 'Deaths', '1,446,084', '#dc3124'],
  [FaHeartbeat, 512, 'Recovered', '39,607,966', '#67b7fb'],
  [FaBed, 640, 'Active Cases', '20,793,635', '#ebd34d'],
  [FaProcedures, 640, 'Critical Cases', '105,258', '#f49d4f'],
  [FaBriefcaseMedical, 512, 'Tests done', '990,383,590', '#70e84a'],
  [FaFlag, 512, 'Recovered Countries', '6 / 221', '#60d5fa'],
  [FaUsers, 640, 'Population', '7,790,209,306', '#ffffff'],
];

const continents = [
  ['All', 88], ['N. America', 212], ['Europe', 154], ['Asia', 114],
  ['S. America', 208], ['Oceania', 172], ['Africa', 136],
];

const days = [['Today (latest)', 250], ['Yesterday', 196], ['2 Days Ago', 216]];

function WorldMap() {
  return (
    <MapPanel>
      <MapSvg viewBox="0 0 2220 600">
        {regions.map((r) => (
          <g key={r.t} transform={r.t}>
            {r.shapes.map(([fill, d], i) => <path key={i} fill={fill} d={d} />)}
          </g>
        ))}
        <path className="isle" fill="#fff" d="M1305,570h4v2h-4Z" />
      </MapSvg>
      <ZoomStack>
        <ZoomButton>
          <svg viewBox="0 0 16 16"><path d="M0 8H16M8 0V16" stroke="#fff" strokeWidth="3.4" /></svg>
        </ZoomButton>
        <ZoomButton>
          <svg viewBox="0 0 16 16"><path d="M0 8H16" stroke="#fff" strokeWidth="3.4" /></svg>
        </ZoomButton>
      </ZoomStack>
    </MapPanel>
  );
}

export default function App() {
  return (
    <Page>
      <Global />
      <Navbar>
        <NavInner>
          <Logo viewBox="0 0 58 58">
            <FaVirus x="1" y="3" width="55" height="55" size={55} color="#72f6a8" />
            <circle cx="47.5" cy="11" r="9.4" fill="#ee726f" />
          </Logo>
          <NavLink $w={87}>Home</NavLink>
          <NavLink $w={63}>Map</NavLink>
          <NavLink $w={136}>3D Globe</NavLink>
          <NavLink $w={132}>Compare</NavLink>
          <NavLink $w={124}>About<Caret /></NavLink>
          <CoffeeButton>
            <Cup viewBox="268 148 192 126">
              <path d="M280 153H406C436 153 453 172 453 196C453 222 432 238 401 239C400 258 392 267 377 267H296C282 267 273 259 273 245V160C273 156 276 153 280 153Z" fill="#fff" stroke="#000" strokeWidth="6" />
              <path d="M401 174H409C424 174 432 183 432 196C432 212 420 219 401 219Z" fill="#f0884e" stroke="#000" strokeWidth="6" />
              <path d="M338 243L307 212C291 194 313 169 338 187C363 169 385 194 369 212Z" fill="#ec6472" />
            </Cup>
            <CoffeeText>Buy me a coffee</CoffeeText>
          </CoffeeButton>
        </NavInner>
      </Navbar>
      <Container>
        <Crumbs><Glyph $size={32} $units={576}><FaHome /></Glyph></Crumbs>
        <WorldMap />
        <MapCaption>
          Map colorings based on: <u>Total Cases </u>
          <Glyph $size={32} $units={320} $m="8px 0 0"><FaCaretDown /></Glyph>
        </MapCaption>
        <Title>
          <Glyph $size={48} $units={496} $m="3px 26px 0 0"><FaGlobe /></Glyph>
          World
        </Title>
        <DateLine>Sat, 28th of Nov 2020, 13:11:35</DateLine>
        <Stats>
          {stats.map(([Icon, units, label, value, color]) => (
            <Stat key={label} $color={color}>
              <StatHead>
                <StatIcon><Glyph $size={48} $units={units}><Icon /></Glyph></StatIcon>
                <StatLabel>{label}</StatLabel>
              </StatHead>
              <StatValue>{value}</StatValue>
            </Stat>
          ))}
        </Stats>
        <ButtonRow>
          {continents.map(([name, w], i) => <Button key={name} $w={w} $active={i === 0}>{name}</Button>)}
        </ButtonRow>
        <ButtonRow>
          {days.map(([name, w], i) => <Button key={name} $w={w} $active={i === 0}>{name}</Button>)}
        </ButtonRow>
        <Search>
          <SearchField>Search Country</SearchField>
          <ResetButton>Reset<Glyph $size={32} $units={640}><FaBackspace /></Glyph></ResetButton>
        </Search>
        <Tip>
          <i>Pro tip:</i> Click on
          <TipBadge><Glyph $size={32} $units={576} $m="3px 0 0"><FaShareSquare /></Glyph></TipBadge>
          to view statistics per province or county.
        </Tip>
      </Container>
    </Page>
  );
}
